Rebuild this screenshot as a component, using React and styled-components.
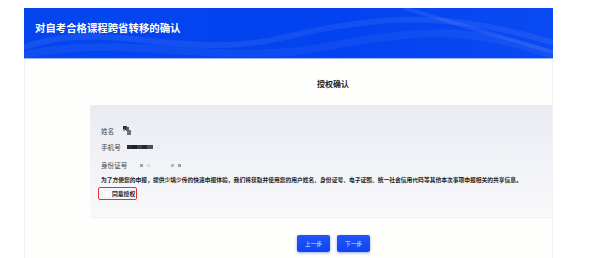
import React from 'react'
import styled, { createGlobalStyle } from 'styled-components';

const GlobalStyle = createGlobalStyle`
    html, body {
        margin: 0;
        padding: 0;
        background: #ffffff;
    }
    body {
        font-family: "Noto Sans CJK SC", "Noto Sans", sans-serif;
        color: #1f2329;
    }
`;

const Page = styled.div`
    width: 529px;
    margin: 8px 0 0 24px;
`;

const Header = styled.div`
    position: relative;
    height: 51px;
    background: linear-gradient(90deg, #0446ee 0%, #0342f0 60%, #0a4af2 100%);
    border-bottom: 1px solid #9fbaff;
    overflow: hidden;
    display: flex;
    align-items: flex-start;
    padding: 13px 0 0 11px;
    box-sizing: border-box;
`;

const Waves = styled.svg`
    position: absolute;
    inset: 0;
    width: 100%;
    height: 100%;
`;

const HeaderTitle = styled.h1`
    position: relative;
    margin: 0;
    color: #ffffff;
    font-size: 10.4px;
    line-height: 14px;
    font-weight: 600;
    letter-spacing: 0;
`;

const Panel = styled.div`
    background: #fefefd;
    border-left: 1px solid #f2f2f2;
    border-right: 1px solid #f2f2f2;
    padding: 19px 0 6px 65px;
    min-height: 192px;
    box-sizing: border-box;
`;

const SectionTitle = styled.h2`
    margin: 0 0 15px 24px;
    text-align: center;
    font-size: 8px;
    line-height: 12px;
    font-weight: 700;
    color: #1a1a1a;
`;

const Card = styled.div`
    background: linear-gradient(180deg, #e9ebf2 0%, #f3f4f8 60%, #f9f9fb 100%);
    border-bottom: 1px solid #eef0f5;
    border-radius: 3px 0 0 3px;
    padding: 21px 0 17px 11px;
    display: flex;
    flex-direction: column;
`;

const InfoRow = styled.div`
    display: flex;
    align-items: center;
    height: 10px;
    margin-bottom: ${p => p.$gap}px;
    font-size: 6.6px;
    color: #3a3f47;
`;

const Label = styled.span`
    width: ${p => p.$w}px;
    flex-shrink: 0;
    line-height: 10px;
`;

const Notice = styled.p`
    margin: 0 0 3px;
    font-size: 5.78px;
    line-height: 9px;
    font-weight: 700;
    color: #1c1f24;
    white-space: nowrap;
`;

const Agree = styled.label`
    display: inline-flex;
    align-items: center;
    align-self: flex-start;
    gap: 2px;
    width: 39px;
    height: 13px;
    margin-left: -3px;
    padding-left: 3px;
    box-sizing: border-box;
    border: 1.2px solid #e8312f;
    border-radius: 2px;
    font-size: 5.8px;
    font-weight: 700;
    color: #1f2329;
`;

const Check = styled.span`
    width: 6px;
    height: 6px;
    border-radius: 1.5px;
    background: #ffffff;
    border: 0.5px solid #eceef2;
`;

const Actions = styled.div`
    display: flex;
    justify-content: center;
    gap: 7px;
    margin: 17px 0 0 25px;
`;

const StepButton = styled.button`
    width: 33px;
    height: 17px;
    padding: 0;
    border: none;
    border-radius: 2px;
    background: linear-gradient(180deg, #2354f7 0%, #0f44f2 100%);
    box-shadow: 0 1px 3px rgba(20, 70, 240, 0.45);
    color: #dfe7ff;
    font-family: "Noto Sans CJK SC", sans-serif;
    font-size: 5.6px;
    cursor: pointer;
`;

const Mosaic = ({ blocks, width, height }) => (
    <svg width={width} height={height} viewBox={`0 0 ${width} ${height}`}>
        {blocks.map(([x, y, w, h, c], i) => (
            <rect key={i} x={x} y={y} width={w} height={h} fill={c} />
        ))}
    </svg>
);

const nameBlocks = [
    [0, 0, 4, 4, '#2a2d36'],
    [3, 1, 3, 4, '#555a66'],
    [4, 4, 4, 5, '#6b717e'],
    [0, 3, 2, 2, '#8a8f99'],
];

const phoneBlocks = [
    [0, 1, 5, 4, '#2b2e36'],
    [5, 1, 5, 4, '#1f2229'],
    [10, 1, 5, 4, '#3b3f48'],
    [15, 1, 5, 4, '#262a31'],
    [20, 1, 6, 4, '#4a4e58'],
    [30, 1, 3, 4, '#e4e7ee'],
];

const idBlocks = [
    [0, 1, 3, 3, '#9da1aa'],
    [7, 1, 3, 3, '#dcdee4'],
    [31, 1, 3, 3, '#b4b8c0'],
    [38, 1, 3, 3, '#9a9ea8'],
];

const App = () => {
    return (
        <>
            <GlobalStyle />
            <Page>
                <Header>
                    <Waves viewBox="0 0 529 51" preserveAspectRatio="none">
                        <path d="M0 40 C 80 10, 160 55, 260 30 S 430 5, 529 35" stroke="rgba(255,255,255,0.07)" strokeWidth="6" fill="none" />
                        <path d="M0 48 C 100 25, 200 60, 300 40 S 450 20, 529 48" stroke="rgba(255,255,255,0.05)" strokeWidth="8" fill="none" />
                        <path d="M380 0 C 430 15, 480 30, 529 45" stroke="rgba(255,255,255,0.08)" strokeWidth="4" fill="none" />
                    </Waves>
                    <HeaderTitle>对自考合格课程跨省转移的确认</HeaderTitle>
                </Header>
                <Panel>
                    <SectionTitle>授权确认</SectionTitle>
                    <Card>
                        <InfoRow $gap={6}>
                            <Label $w={22}>姓名</Label>
                            <Mosaic blocks={nameBlocks} width={9} height={10} />
                        </InfoRow>
                        <InfoRow $gap={8}>
                            <Label $w={26}>手机号</Label>
                            <Mosaic blocks={phoneBlocks} width={34} height={6} />
                        </InfoRow>
                        <InfoRow $gap={5}>
                            <Label $w={39}>身份证号</Label>
                            <Mosaic blocks={idBlocks} width={42} height={5} />
                        </InfoRow>
                        <Notice>为了方便您的申报，提供少填少传的快速申报体验，我们将获取并使用您的用户姓名、身份证号、电子证照、统一社会信用代码等其他本次事项申报相关的共享信息。</Notice>
                        <Agree>
                            <Check />
                            同意授权
                        </Agree>
                    </Card>
                    <Actions>
                        <StepButton>上一步</StepButton>
                        <StepButton>下一步</StepButton>
                    </Actions>
                </Panel>
            </Page>
        </>
    )
}

export default App
